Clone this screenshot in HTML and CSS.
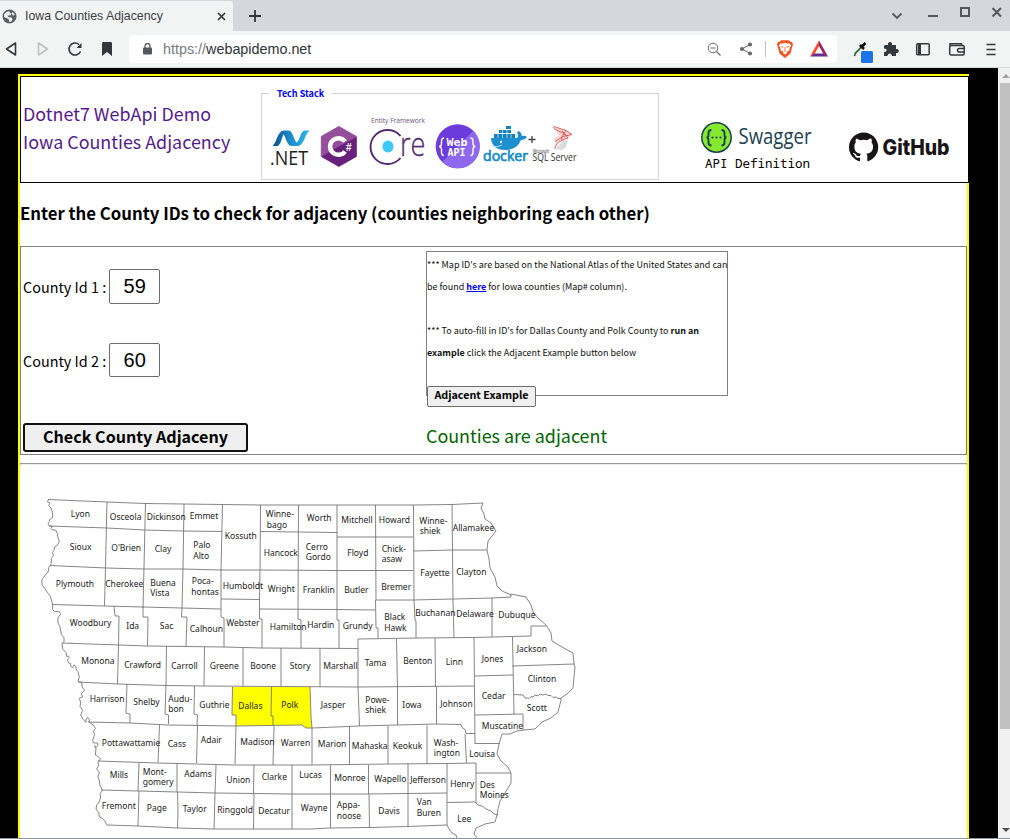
FILE: index.html
```html
<!DOCTYPE html>
<html lang="en">
<head>
<meta charset="utf-8">
<title>Iowa Counties Adjacency</title>
<link rel="stylesheet" href="styles.css">
</head>
<body>
<div class="window">
  <div class="tabs">
    <div class="tab">
      <svg class="globe" width="15" height="15" viewBox="0 0 15 15"><circle cx="7.5" cy="7.5" r="7" fill="#5a5f64"/><path d="M2 7C2 4.500 4 2.500 7.500 2.500L8 4 9.500 5 8 6.500H5.500l1 1.500 3 .5 1 1.500-1 2.500-2 .5-1-3L2 8zM10.500 3l-1 1.500 1.500 2 2-.5z" fill="#f2f3f4"/></svg>
      <span class="tab-title">Iowa Counties Adjacency</span>
      <svg width="9" height="9" viewBox="0 0 9 9"><path d="M1 1l7 7M8 1l-7 7" stroke="#33383d" stroke-width="1.700"/></svg>
    </div>
    <svg class="newtab" width="12" height="12" viewBox="0 0 12 12"><path d="M6 0v12M0 6h12" stroke="#303437" stroke-width="1.800"/></svg>
    <svg class="winctl" width="120" height="31" viewBox="890 0 120 31" fill="none" stroke="#54585c" stroke-width="2"><path d="M892.500 13.500l4.500 4.500 4.500-4.500" stroke-width="1.800"/><path d="M928 16h10M961 8h8v8h-8z"/><path d="M992.500 8l8.500 8.500M1001 8l-8.500 8.500"/></svg>
  </div>
  <div class="toolbar">
    <svg width="130" height="36" viewBox="0 31 130 36" fill="none" stroke="#33383c" stroke-width="1.600" stroke-linejoin="round">
      <path d="M15.500 43v12l-9-6z"/>
      <path d="M38.500 43v12l9-6z" stroke="#bfc1c3"/>
      <path d="M80.500 51.500A6 6 0 1 1 79 44.500"/><path d="M81.500 43v5h-5z" fill="#33383c" stroke="none"/>
      <path d="M102 43.500c0-1 .5-1.500 1.500-1.500h7c1 0 1.500.5 1.500 1.500V56l-5-4-5 4z" fill="#33383c" stroke="none"/>
    </svg>
    <div class="address">
      <svg width="9" height="12" viewBox="0 0 9 12"><path d="M2 5V3a2.500 2.500 0 0 1 5 0v2" fill="none" stroke="#55595d" stroke-width="1.300"/><rect y="4.500" width="9" height="7" rx="1" fill="#55595d"/></svg>
      <span class="url"><span class="scheme">https://</span>webapidemo.net</span>
      <svg width="133" height="28" viewBox="704 35 133 28" fill="none" stroke="#66696c">
        <circle cx="713" cy="48" r="4.800"/><path d="M710.500 48h5M716.500 51.500l4 4" stroke-width="1.200"/>
        <path d="M750 44.500l-8 4.500 8 4.500"/><g fill="#66696c" stroke="none"><circle cx="742" cy="49" r="2.100"/><circle cx="750" cy="44.500" r="2.100"/><circle cx="750" cy="53.500" r="2.100"/></g>
        <path d="M765.500 41v16" stroke="#c0c2c4"/>
        <path d="M781 40.200h8l1.500 1.500 1.500.3 1 2.500-.5 1.500-2 7.500-5.500 4.500-5.500-4.500-2-7.500-.5-1.500 1-2.500 1.500-.3z" fill="#fb5420" stroke="none"/>
        <path d="M780.500 43.500h2l2.500-.7 2.500.7h2l1.500 2-1.700 3.500.2 1.500-2.500 1 .2 1.500-2.200 1.500-2.200-1.500.2-1.500-2.500-1 .2-1.500-1.700-3.500z" fill="#fff" stroke="none"/><path d="M781 46.500l2.500.7M789 46.500l-2.500.7M785 47v3M783.800 51h2.400" stroke="#fb5420" stroke-width=".8"/>
        <path d="M819 40.500l9 16-4.500-2.500-4.500-8z" fill="#9e1f63" stroke="none"/><path d="M819 40.500v5.500l-4.500 8-4.500 2.500z" fill="#ff4724" stroke="none"/><path d="M810 56.500l4.500-3h9l4.500 3z" fill="#662d91" stroke="none"/>
      </svg>
    </div>
    <svg class="ext" width="170" height="36" viewBox="840 31 170 36" fill="none" stroke="#33383c" stroke-width="1.500">
      <path d="M854.500 56l1-3 6.500-6.500" stroke="#3f6a48" stroke-width="1.800"/><path d="M860 45l4 4M861.500 47l4-4" stroke="#111" stroke-width="2.600"/>
      <rect x="861" y="51" width="12" height="12" rx="1.500" fill="#1a73e8" stroke="none"/>
      <path d="M885 45h3c-1-4 5-4 4 0h4v4c4-1 3.500 5 0 4v3h-4c0-3.500-4.500-3.500-4.500 0H884v-4c3.500 0 3.500-3.500 0-3.500V46z" fill="#33383c" stroke="none"/>
      <rect x="916.700" y="43.700" width="12.500" height="11" rx="1"/><path d="M918 44h3v10h-3z" fill="#33383c" stroke="none"/>
      <rect x="949.700" y="45.500" width="14.500" height="9.500" rx="1.500"/><path d="M950 46v-2.300h11.500V46M964 48.500h-4.500q-2 0-2 1.800t2 1.800h4.500"/>
      <path d="M986.500 44.500h9M986.500 49.500h9M986.500 54.500h9" stroke-width="1.700"/>
    </svg>
  </div>
  <div class="viewport">
    <main class="sheet">
      <header class="header">
        <a class="brand">Dotnet7 WebApi Demo<br>Iowa Counties Adjacency</a>
        <fieldset class="stack">
          <legend>Tech Stack</legend>
          <div class="logos">
          <svg width="50" height="60" viewBox="266 115 50 60"><defs><linearGradient id="nb" x2="1"><stop stop-color="#0a4f8f"/><stop offset=".5" stop-color="#1b8fd0"/><stop offset="1" stop-color="#35b8e8"/></linearGradient></defs>
            <path d="M272.500 146c4-3 5-15 11-15.500h5c4 0 5 8 8 12 4-3 4-11.500 8-12h5.500c-5 3-6 15-12 15.500h-6c-5 0-6-8-8.500-12-2 5-3 11.500-6 12z" fill="url(#nb)"/><text class="net" x="270" y="164.500" textLength="38" lengthAdjust="spacingAndGlyphs">.NET</text></svg>
          <svg width="47" height="60" viewBox="316 115 47 60"><path d="M338.800 126.500l17.500 10v20l-17.500 10-17.500-10v-20z" fill="#954f9a" stroke="#954f9a" stroke-linejoin="round"/><path d="M356.500 137v19.500l-17.700 10-17.500-10 17.500-10z" fill="#68217a"/><path d="M345 141.500a8.300 8.300 0 1 0 0 10" fill="none" stroke="#fff" stroke-width="4.500"/><text class="sharp" x="346" y="150.500">#</text></svg>
          <svg width="68" height="60" viewBox="363 115 68 60"><text class="ef" x="371" y="123" textLength="54" lengthAdjust="spacingAndGlyphs">Entity Framework</text><path d="M400.500 136a17 17 0 1 0 0 22" fill="none" stroke="#512b6f" stroke-width="1.900"/><ellipse cx="388" cy="146.500" rx="5.500" ry="6" fill="#3bcaf6"/><text class="re" x="400" y="155.500" textLength="25.500" lengthAdjust="spacingAndGlyphs">re</text></svg>
          <svg width="51" height="60" viewBox="431 115 51 60"><circle cx="457.700" cy="146.300" r="22" fill="#6b3bdb"/><path d="M473.300 130.700a22 22 0 0 1-31.200 31.200z" fill="#9068ee"/><g class="webapi"><text x="446.500" y="146" textLength="21" lengthAdjust="spacingAndGlyphs">Web</text><text x="447.500" y="155.500" textLength="18" lengthAdjust="spacingAndGlyphs">API</text></g><path d="M444 138q-2.500 0-2.500 3v2.500q0 3-2.500 3 2.500 0 2.500 3v3q0 3 2.500 3M470.500 138q2.500 0 2.500 3v2.500q0 3 2.500 3-2.500 0-2.500 3v3q0 3-2.500 3" fill="none" stroke="#fff" stroke-width="1.400"/></svg>
          <svg width="48" height="60" viewBox="482 115 48 60"><path d="M491 138h26q2-2 0-6l2-1q3 2 3 5 3-1 5 1-2 3-6 3-4 10-16 10-13 0-14-12z" fill="#1b8fd0"/><path d="M494 134h21v4h-21zM499 130h12v3h-12zM506 126h5v3h-5z" fill="#1482be"/><path d="M498 133v5M502.500 130v8M507 130v8M511 133v5" stroke="#dff0f8" stroke-width=".7"/><circle cx="501" cy="142" r="1.200" fill="#fff"/><path d="M492 146q6 2 10-1" stroke="#bce0f3" fill="none"/><text class="docker" x="483" y="161" textLength="45" lengthAdjust="spacingAndGlyphs">docker</text></svg>
          <svg width="52" height="60" viewBox="530 115 52 60"><path d="M528.500 139.500h7M532 136v7" stroke="#444" stroke-width="1.300"/><path d="M553 127l11 2 8 5-4 5-9 3-6 8 3-8-2-3 5-3z" fill="#f7d5d3"/><path d="M553 127c2 4 9 4 14 9M554 126.500l12 4 6 4-9 2-8 5M566 130l-5 9M562 131l6 7-7 2M555 149c1-5 3-7 8-9" stroke="#d94848" fill="none" stroke-width=".8"/><path d="M555 149l8-8 5-1-2 7-4 3z" fill="#d9dcdd"/><text class="ms" x="533" y="152.500" textLength="16" lengthAdjust="spacingAndGlyphs">Microsoft</text><text class="sql" x="532.500" y="160.700" textLength="44" lengthAdjust="spacingAndGlyphs">SQL Server</text></svg>
          </div>
        </fieldset>
        <a class="swagger"><svg width="114" height="34" viewBox="699 120 114 34"><circle cx="716.500" cy="137.500" r="14.700" fill="#85ea2d" stroke="#1d3f50" stroke-width="1.500"/><path d="M711.500 130q-3 0-3 3v2q0 2.500-2 2.500 2 0 2 2.500v2.500q0 3 3 3M721.500 130q3 0 3 3v2q0 2.500 2 2.500-2 0-2 2.500v2.500q0 3-3 3" fill="none" stroke="#1d3f50" stroke-width="1.900"/><g fill="#1d3f50"><circle cx="712.500" cy="137.500" r="1.100"/><circle cx="716.500" cy="137.500" r="1.100"/><circle cx="720.500" cy="137.500" r="1.100"/></g><text class="swag" x="738.500" y="144" textLength="73" lengthAdjust="spacingAndGlyphs">Swagger</text></svg><span>API Definition</span></a>
        <a class="github"><svg width="104" height="34" viewBox="847 131 104 34"><g transform="translate(849 132.600) scale(1.830)"><path fill="#171515" d="M8 0C3.580 0 0 3.580 0 8c0 3.540 2.290 6.530 5.470 7.590.4.070.55-.17.55-.38 0-.19-.01-.82-.01-1.490-2.010.37-2.530-.49-2.690-.94-.09-.23-.48-.94-.82-1.130-.28-.15-.68-.52-.01-.53.63-.01 1.080.58 1.230.82.72 1.210 1.870.87 2.330.66.07-.52.28-.87.51-1.070-1.780-.2-3.640-.89-3.640-3.950 0-.87.31-1.590.82-2.150-.08-.2-.36-1.020.08-2.120 0 0 .67-.21 2.200.82a7.600 7.600 0 0 1 4 0c1.530-1.040 2.200-.82 2.200-.82.44 1.100.16 1.920.08 2.120.51.56.82 1.270.82 2.150 0 3.070-1.870 3.750-3.650 3.950.29.25.54.73.54 1.480 0 1.070-.01 1.930-.01 2.200 0 .21.15.46.55.38A8 8 0 0 0 16 8c0-4.420-3.580-8-8-8z"/></g><text class="gh" x="882.500" y="155" textLength="67" lengthAdjust="spacingAndGlyphs">GitHub</text></svg></a>
      </header>
      <h3>Enter the County IDs to check for adjaceny (counties neighboring each other)</h3>
      <section class="form">
        <div class="fields">
          <label class="field">County Id 1 : <input value="59"></label>
          <label class="field second">County Id 2 : <input value="60"></label>
          <button class="check">Check County Adjaceny</button>
        </div>
        <div class="info">
          <div class="note">*** Map ID's are based on the National Atlas of the United States and can<br>be found <a class="here">here</a> for Iowa counties (Map# column).<br><br>*** To auto-fill in ID's for Dallas County and Polk County to <b>run an</b><br><b>example</b> click the Adjacent Example button below</div>
          <button class="example">Adjacent Example</button>
          <div class="result">Counties are adjacent</div>
        </div>
      </section>
      <hr>
      <svg class="map" width="947" height="373" viewBox="20 465 947 373">
        <path class="picked" d="M232.500 687H310l1 30 1 11h-6l-4-3-29 .5-37 .5v-11h-4z"/>
        <g class="lines">
          <path d="M48 499.500l59 2.500 38 1.500 39 .5 38 .5 38 .5h153l39-.5 31-1.500"/>
          <path class="river" transform="translate(36 495) scale(.33333)" d="M38 13L34 20 42 24 38 32 44 38 48 48 50 60 50 68 40 74 40 80 36 86 40 93 50 94 44 100 48 104 60 106 64 116 66 128 70 138 66 148 56 156 54 166 50 172 52 182 46 190 46 202 44 211 38 218 38 228 28 240 18 254 18 270 26 280 34 292 42 302 46 314 50 328 50 344 56 350 70 350 74 358 66 368 66 384 72 396 74 408 76 418 84 428 84 440 78 446 80 462 90 472 92 484 98 484 100 488 94 496 98 504 104 506 104 514 110 518 114 510 120 514 120 522 126 530 130 546 126 558 138 564 138 576 146 586 136 596 140 606 130 610 134 622 132 634 140 646 134 660 142 674 150 682 150 672 156 668 160 674 160 682 172 690 178 700 172 710 176 718 170 736 172 744 184 744 186 752 180 758 176 752 180 762 178 780 188 786 194 792 186 800 188 812 182 822 190 832 186 846 190 856 192 872 200 886 192 896 194 906 190 920 182 930 180 942 188 952 190 966 200 970 208 980 212 990"/>
          <path d="M107 825l31 1 40 2 36 1h96l20-1 39-.5 39-1 39-1.500 2 4 3 4 4 2 1 4"/>
          <path d="M483 503l-2 5 3 6 1 5 6 4 5 8-4 5-4 5-1 9 2 9 1 9 5 9 2 9 5 5 9 4v-1l15 3 5 8 2 7 5 6 8 7 5 8 1 8 10 6 11 6 1 11 1 3-1 10-1 11-6 6-6 4v2l-3 12-7 6-9 4-7 7-11 1-7 1-7 3h-8l-3 10-2 10 4 7 7 6 3 6v10l-6 10-5 8-2 8-1 6-2 7-10 2-9 4-2 6 4 5"/>
          <path d="M49 526l58 2 38 2 39 1 38 .5M50 565.500l56 2.500 38 1h39l38 1h39l77 .5h76M52 604.500l53 1.500 38 1 39 1 39 1M221 599l38 .5M260 531.500l77 1M260 609l77 .5 38.500.5M337 537h76M376 600h37l40-1 39-1 19-1v-2M413 551l39-1h35"/>
          <path d="M107 502l-1.500 65-1 39M145.500 503l-1.500 64-1 41M184 504l-1 64-1 40M222.500 504l-1.500 66v29M260.500 505l-.5 65-.5 29M298.500 505l-.5 105M337 505v105M375.500 505l.5 95M413.500 505l.5 95 1 20 1 1v17M452 504l1 96 1 38M492 598v39"/>
          <path d="M114 606l1 10h4l-.5 29M143 607v10h5l-.5 29M182 608l-.5 9h5.500l-1 29M221 599v18l3 1v29M259.500 599v20h2.500v29M298 610v9l3 1v28M337 610v10h2v28M375.500 600l.5 28h2v10"/>
          <path d="M62 643l57 2 28 1 77 1 38 1 96 .5M358 687v-48l58-1 57-.5 58-1.500v-10h15"/>
          <path d="M118.500 645l-1 39M166.500 646l-.5 40M204.500 647l-.5 39M243 648v38M281 648v38M320 648.500V687M396.500 639l1 48M435 638l.5 49M474 638l1 106M512.500 637l1.500 77M475 676l38-1M512 666l62-2M475 715l48-1v16M475 743.500h25"/>
          <path d="M78 682l40 2 48 1.500 38 .500 77 .5 77 .5 116-1M514 694.500l9 .5 2 3h2l2 .5 2-2 2 .5 2-2 3 1 2-2 3 1 3-1 2 1.500 3 0 2 2 3-.5 2 1.500 3 0"/>
          <path d="M127 684l-1 29 4 1v9M166 685l-1 29 3.500 1v9M194.500 686l-.5 28 3.500 1-.5 10M232.500 687l-.500 28h4v11M271.500 687l-.5 29h2v9.500M310 687l1 30 1 11M358 687l1.500 39M397.500 687v38M436.500 687v37"/>
          <path d="M88 722l42 1 38 2 68 1 66-1 4 3h6l47-2 77-2 25 .5 1 3 3 2 1 4h9M465 734l1.500 29"/>
          <path d="M159.500 724.500l-1.500 38M197.500 725l-1 38M236 726l-1 38M274 726l-1 39M312 728v37M349.500 726v38M388 726v38M427 725.500v38M98 761l60 2 77 2h77l76-1 59-.5 29-.5v40M139 763l-1 28M177 764v28M216 765l-1 28M254 765l-.5 28M292 765v29M330.500 765v29M368.500 765v29M408 764v30M447 764v61M476 773h35"/>
          <path d="M447 802.500l28-.5 3 3 4 1 4 3 5 2 3 3 4 1M101 790l77 2 37 1 77 1h76l79-1M139 791l-1 35M177.500 792l.5 19-.5 17M215 793l-1 36M254 794l-.5 35M292 794v35M330.500 794v34M369 794l.5 33M408 794v32"/>
        </g>
        <g class="names">
          <text x="71" y="517">Lyon</text><text x="110" y="520">Osceola</text><text x="147" y="520">Dickinson</text><text x="190" y="519">Emmet</text><text x="225" y="539">Kossuth</text><text x="266" y="517">Winne-</text><text x="267" y="528">bago</text><text x="307" y="521">Worth</text><text x="341.500" y="523">Mitchell</text><text x="379" y="523">Howard</text><text x="419.500" y="524">Winne-</text><text x="420" y="534">shiek</text><text x="453" y="531">Allamakee</text>
          <text x="70" y="550">Sioux</text><text x="111.500" y="551">O'Brien</text><text x="155" y="552">Clay</text><text x="193.500" y="548">Palo</text><text x="193.500" y="559">Alto</text><text x="264" y="556">Hancock</text><text x="306" y="550">Cerro</text><text x="306" y="560">Gordo</text><text x="347.500" y="556">Floyd</text><text x="382" y="552">Chick-</text><text x="382" y="562">asaw</text><text x="420.500" y="576">Fayette</text><text x="456.500" y="575">Clayton</text>
          <text x="56" y="587">Plymouth</text><text x="105.500" y="587">Cherokee</text><text x="150.500" y="586">Buena</text><text x="150.500" y="596">Vista</text><text x="192" y="584">Poca-</text><text x="191.500" y="595">hontas</text><text x="223" y="589">Humboldt</text><text x="268" y="592">Wright</text><text x="303" y="593">Franklin</text><text x="344.500" y="593">Butler</text><text x="381.500" y="590">Bremer</text>
          <text x="70" y="626">Woodbury</text><text x="126.500" y="629">Ida</text><text x="160" y="629">Sac</text><text x="190" y="632">Calhoun</text><text x="226.500" y="626">Webster</text><text x="270" y="630">Hamilton</text><text x="307.500" y="628">Hardin</text><text x="343" y="629">Grundy</text><text x="384.500" y="620">Black</text><text x="384.500" y="631">Hawk</text><text x="415.500" y="616">Buchanan</text><text x="456.500" y="617">Delaware</text><text x="498.500" y="618">Dubuque</text>
          <text x="81.500" y="664">Monona</text><text x="124.500" y="668">Crawford</text><text x="171.500" y="669">Carroll</text><text x="210" y="669">Greene</text><text x="250.500" y="669">Boone</text><text x="290" y="669">Story</text><text x="323.500" y="669">Marshall</text><text x="365" y="666">Tama</text><text x="403.500" y="664">Benton</text><text x="446" y="665">Linn</text><text x="482" y="662">Jones</text><text x="517" y="652">Jackson</text><text x="528" y="682">Clinton</text><text x="482" y="699">Cedar</text><text x="527" y="711">Scott</text><text x="482" y="729">Muscatine</text>
          <text x="90" y="702">Harrison</text><text x="133.500" y="705">Shelby</text><text x="168.500" y="702">Audu-</text><text x="168.500" y="712">bon</text><text x="199.500" y="708">Guthrie</text><text x="238.500" y="709">Dallas</text><text x="281.500" y="708">Polk</text><text x="321" y="708">Jasper</text><text x="365.500" y="703">Powe-</text><text x="365.500" y="713">shiek</text><text x="402.500" y="708">Iowa</text><text x="440.500" y="707">Johnson</text>
          <text x="102" y="746">Pottawattamie</text><text x="168" y="747">Cass</text><text x="201" y="743">Adair</text><text x="240.500" y="745">Madison</text><text x="281" y="746">Warren</text><text x="318" y="747">Marion</text><text x="352" y="749">Mahaska</text><text x="393" y="749">Keokuk</text><text x="434" y="746">Wash-</text><text x="434" y="756">ington</text><text x="469.500" y="757">Louisa</text>
          <text x="110" y="778">Mills</text><text x="143" y="775">Mont-</text><text x="143" y="785">gomery</text><text x="184.500" y="777">Adams</text><text x="226.500" y="783">Union</text><text x="262" y="780">Clarke</text><text x="299.500" y="778">Lucas</text><text x="334.500" y="781">Monroe</text><text x="374.500" y="782">Wapello</text><text x="410.500" y="783">Jefferson</text><text x="450.500" y="787">Henry</text><text x="480" y="788">Des</text><text x="480" y="798">Moines</text>
          <text x="102" y="809">Fremont</text><text x="147" y="811">Page</text><text x="183" y="812">Taylor</text><text x="217.500" y="813">Ringgold</text><text x="258.500" y="814">Decatur</text><text x="301" y="811">Wayne</text><text x="337" y="808">Appa-</text><text x="337" y="819">noose</text><text x="378.500" y="814">Davis</text><text x="417" y="805">Van</text><text x="417" y="816">Buren</text><text x="457.500" y="822">Lee</text>
        </g>
      </svg>
    </main>
    <div class="scroll"><span class="up"></span><span class="thumb"></span><span class="down"></span></div>
  </div>
</div>
</body>
</html>
```
FILE: styles.css
```css
* { box-sizing: border-box; }
body { margin: 0; background: #fff; font-family: "Noto Sans CJK SC", "Noto Sans", sans-serif; color: #000; }
svg { display: block; flex: none; }
.window { width: 1010px; height: 839px; display: flex; flex-direction: column; overflow: hidden; border-bottom: 1px solid #8b939c; }
.tabs { height: 31px; flex: none; background: #d4d8dc; display: flex; align-items: center; font-family: "Liberation Sans", Arial, sans-serif; }
.tab { width: 233px; height: 30px; margin-top: 1px; padding: 0 7px 0 2px; background: #f2f3f3; border-radius: 0 4px 0 0; display: flex; align-items: center; }
.tab-title { flex: 1; margin-left: 8px; font-size: 12.35px; color: #3b4045; white-space: nowrap; }
.newtab { margin-left: 16px; }
.winctl { margin-left: auto; }
.toolbar { height: 37px; flex: none; background: #f2f3f3; border-bottom: 1px solid #d5d7d9; display: flex; align-items: center; }
.address { width: 708px; height: 28px; margin-left: -1px; padding-left: 14px; border-radius: 4px; background: #fff; display: flex; align-items: center; font: 14.35px "Liberation Sans", Arial, sans-serif; color: #2f3438; }
.url { margin-left: 11px; flex: 1; white-space: nowrap; }
.scheme { color: #777b7f; }
.ext { margin-left: 3px; }
.viewport { flex: 1; min-height: 0; background: #000; display: flex; overflow: hidden; }
.sheet { width: 951px; height: 800px; margin: 6px 0 0 18px; border: 2px solid #ff0; background: #fff; flex: none; }
.header { width: 949px; height: 107px; border: 1px solid #000; background: #fff; display: flex; }
.brand { width: 238px; padding: 22px 0 0 2px; font-size: 17.9px; line-height: 28px; color: #551a8b; white-space: nowrap; }
.stack { width: 398px; height: 93px; margin: 10px 0 0 2px; padding: 0 0 0 4px; border: 1px solid #d3d3d3; }
.stack legend { margin-left: 3px; padding: 0 8px; font-size: 9px; line-height: 13px; font-weight: 700; color: #00f; }
.logos { display: flex; padding-top: 15px; }
.logos svg, .swagger svg, .github svg { overflow: visible; }
.net { font: 20px "Open Sans", sans-serif; fill: #222; }
.sharp { font: bold 10px "Liberation Sans", sans-serif; fill: #fff; }
.ef { font: 7px "Open Sans", sans-serif; fill: #6e5380; }
.re { font: 300 33px "Open Sans", sans-serif; fill: #512b6f; stroke: #512b6f; stroke-width: .3px; }
.webapi { font: bold 10px "DejaVu Sans Mono", monospace; fill: #fff; }
.docker { font: 400 14.5px "Open Sans", sans-serif; fill: #168bc9; stroke: #168bc9; stroke-width: .7px; }
.ms { font: 5px "Liberation Sans", sans-serif; fill: #444; }
.sql { font: 11px "Open Sans", sans-serif; fill: #333; }
.swag { font: 22px "Open Sans", sans-serif; fill: #1d3f50; }
.gh { font: 800 22px Inter, sans-serif; fill: #171515; }
.swagger { margin: 43px 0 0 40px; width: 116px; }
.swagger span { display: block; padding: 1px 0 0 6px; font: 12.5px/17px "Noto Sans Mono", "DejaVu Sans Mono", monospace; white-space: nowrap; }
.github { margin: 54px 0 0 32px; }
h3 { margin: 16px 0 19px; font-size: 16.74px; line-height: 28px; white-space: nowrap; }
.form { height: 209px; border: 1px solid #808080; display: flex; }
.fields { width: 405px; padding: 22px 0 0 2px; display: flex; flex-direction: column; align-items: flex-start; }
.field { height: 35px; margin-bottom: 39px; display: flex; align-items: center; gap: 3px; font-size: 14.4px; white-space: nowrap; }
.field input { width: 51px; height: 35px; padding: 0; border: 1px solid #6d6d6d; border-radius: 2px; text-align: center; font: 20px "Liberation Sans", Arial, sans-serif; }
.second input { height: 34px; margin-bottom: 1px; }
.check { width: 225px; height: 29px; margin-top: 6px; padding: 0 0 3px; border: 2px solid #101010; border-radius: 3px; background: #efefef; font: bold 16.1px/20px "Noto Sans CJK SC", sans-serif; }
.info { padding-top: 4px; }
.note { width: 302px; height: 145px; padding: 2px 0 0 0; border: 1px solid #808080; font-size: 8.97px; line-height: 22px; white-space: nowrap; color: #111; }
.here { color: #00e; font-weight: 700; text-decoration: underline; }
.example { position: relative; display: block; width: 109px; height: 21px; margin: -10px 0 0 1px; padding: 0 0 3px; border: 1px solid #6d6d6d; border-radius: 2px; background: #efefef; font: bold 10.75px/14px "Noto Sans CJK SC", sans-serif; }
.result { margin-top: 14px; font-size: 17.9px; line-height: 28px; color: #006400; }
hr { height: 2px; margin: 8px 0 0; border: 1px solid #9a9a9a; border-bottom-color: #eee; }
.lines { fill: none; stroke: #777; stroke-width: .9; }
.river { stroke-width: 2.7; }
.picked { fill: #ff0; }
.names { font: 8.5px "Noto Sans", sans-serif; fill: #222; }
.names text { transform: translateX(-.25px); }
.scroll { width: 12px; margin-left: auto; padding-left: 2px; background: #f1f1f1; display: flex; flex-direction: column; align-items: flex-start; }
.up { margin: 6px 0 5px 2px; border: 4px solid transparent; border-top: 0; border-bottom-color: #a3a3a3; }
.thumb { width: 10px; height: 646px; background: #c1c1c1; }
.down { margin: auto 0 6px 2px; border: 4px solid transparent; border-bottom: 0; border-top-color: #505050; }
```
